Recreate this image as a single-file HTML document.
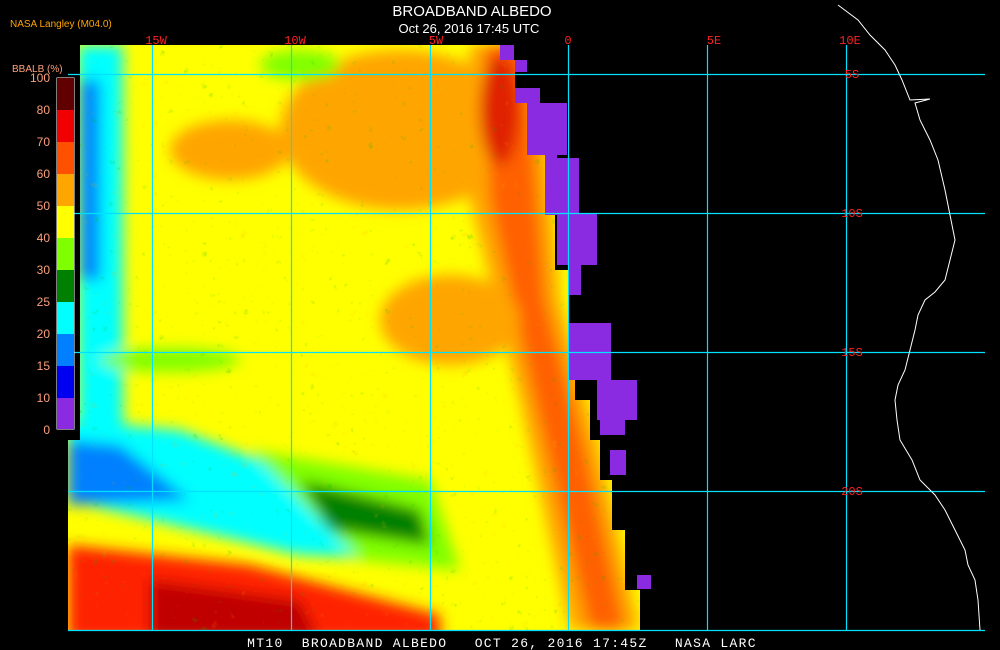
<!DOCTYPE html><html><head><style>
body{margin:0;background:#000;width:1000px;height:650px;overflow:hidden;font-family:"Liberation Sans",sans-serif}
svg{position:absolute;left:0;top:0}
</style></head><body>
<svg width="1000" height="650" viewBox="0 0 1000 650">
<defs>
<filter id="b"><feGaussianBlur stdDeviation="7"/></filter>
<filter id="n" x="0" y="0" width="100%" height="100%"><feTurbulence baseFrequency="0.12" numOctaves="2" seed="3"/><feColorMatrix values="0 0 0 0 0  0 0 0 0 0.5  0 0 0 0 0  0 0 0 1.6 -0.85"/></filter>
<filter id="n2" x="0" y="0" width="100%" height="100%"><feTurbulence baseFrequency="0.1" numOctaves="2" seed="9"/><feColorMatrix values="0 0 0 0 1  0 0 0 0 0.4  0 0 0 0 0  0 0 0 1.6 -0.85"/></filter>
<clipPath id="c"><polygon points="80,45 500,45 500,60 515,60 515,100 527,100 527,150 545,150 545,210 555,210 555,270 568,270 568,330 575,330 575,400 590,400 590,440 600,440 600,480 612,480 612,530 625,530 625,590 640,590 640,630 68,630 68,440 80,440"/></clipPath>
</defs>
<g clip-path="url(#c)">
<rect x="60" y="40" width="600" height="600" fill="#ffff00"/>
<g filter="url(#b)">
<ellipse cx="400" cy="130" rx="120" ry="80" fill="#ffa500"/>
<ellipse cx="230" cy="150" rx="60" ry="30" fill="#ffa500"/>
<polygon points="470,45 540,45 560,300 600,450 640,630 570,630 520,400 470,200" fill="#ffa500"/>
<polygon points="485,45 525,45 545,300 585,450 625,630 590,630 535,400 490,200" fill="#ff6000"/>
<ellipse cx="450" cy="320" rx="70" ry="45" fill="#ffa500"/>
<ellipse cx="500" cy="110" rx="20" ry="55" fill="#e02000"/>
<rect x="78" y="45" width="45" height="400" fill="#00ffff"/>
<rect x="80" y="80" width="20" height="200" fill="#0080ff"/>
<ellipse cx="300" cy="65" rx="40" ry="15" fill="#80ff00"/>
<polygon points="68,420 180,430 430,525 430,560 300,555 68,500" fill="#00ffff"/>
<polygon points="68,440 120,445 190,500 68,505" fill="#0080ff"/>
<polygon points="250,450 430,480 460,570 360,560" fill="#80ff00"/>
<polygon points="300,480 420,510 430,545 330,530" fill="#008000"/>
<polygon points="68,545 250,565 440,615 440,640 68,640" fill="#ff2000"/>
<polygon points="150,580 300,600 320,640 150,640" fill="#c00000"/>
<ellipse cx="170" cy="360" rx="70" ry="12" fill="#80ff00"/>
</g>
<rect x="60" y="40" width="600" height="600" filter="url(#n)" opacity="0.5"/>
<rect x="60" y="40" width="600" height="600" filter="url(#n2)" opacity="0.4"/>
</g>
<g fill="#8a2be2">
<rect x="500" y="45" width="14" height="15"/><rect x="515" y="60" width="12" height="12"/><rect x="515" y="88" width="25" height="15"/><rect x="527" y="103" width="40" height="52"/><rect x="545" y="155" width="12" height="60"/><rect x="557" y="158" width="22" height="57"/><rect x="557" y="213" width="40" height="52"/><rect x="568" y="265" width="13" height="30"/><rect x="568" y="323" width="43" height="57"/><rect x="597" y="380" width="40" height="40"/><rect x="600" y="420" width="25" height="15"/><rect x="610" y="450" width="16" height="25"/><rect x="637" y="575" width="14" height="14"/>
</g>
<g stroke="#00e0ff" stroke-width="1.2">
<line x1="152.5" y1="45" x2="152.5" y2="630"/><line x1="291.5" y1="45" x2="291.5" y2="630"/><line x1="430.5" y1="45" x2="430.5" y2="630"/><line x1="568.5" y1="45" x2="568.5" y2="630"/><line x1="707.5" y1="45" x2="707.5" y2="630"/><line x1="846.5" y1="45" x2="846.5" y2="630"/>
<line x1="68" y1="74.5" x2="985" y2="74.5"/><line x1="68" y1="213.5" x2="985" y2="213.5"/><line x1="68" y1="352.5" x2="985" y2="352.5"/><line x1="68" y1="491.5" x2="985" y2="491.5"/><line x1="68" y1="630.5" x2="985" y2="630.5"/>
</g>
<polyline fill="none" stroke="#fff" stroke-width="1" points="838,5 858,20 870,35 885,50 895,65 902,80 910,100 930,99 915,103 920,120 930,140 938,160 945,190 950,215 955,240 950,260 945,280 935,292 925,300 918,315 915,330 910,350 905,370 898,385 895,400 897,420 900,440 912,460 920,480 935,495 945,510 955,530 965,550 968,565 975,580 978,600 980,630"/>
<g fill="#ff2020" font-family="Liberation Mono,monospace" font-size="12" text-anchor="middle">
<text x="156" y="44">15W</text><text x="295" y="44">10W</text><text x="436" y="44">5W</text><text x="568" y="44">0</text><text x="714" y="44">5E</text><text x="850" y="44">10E</text>
<text x="852" y="78">5S</text><text x="852" y="217">10S</text><text x="852" y="356">15S</text><text x="852" y="495">20S</text>
</g>
<text x="472" y="16" fill="#fff" font-size="15" text-anchor="middle">BROADBAND ALBEDO</text>
<text x="469" y="33" fill="#fff" font-size="13" text-anchor="middle">Oct 26, 2016 17:45 UTC</text>
<text x="10" y="27" fill="#ffa500" font-size="10">NASA Langley (M04.0)</text>
<text x="12" y="72" fill="#ffa07a" font-size="10">BBALB (%)</text>
<rect x="56.5" y="77.5" width="18" height="352" fill="#fff"/>
<g>
<rect x="57" y="78" width="17" height="32" fill="#600000"/><rect x="57" y="110" width="17" height="32" fill="#f00000"/><rect x="57" y="142" width="17" height="32" fill="#ff5000"/><rect x="57" y="174" width="17" height="32" fill="#ffa500"/><rect x="57" y="206" width="17" height="32" fill="#ffff00"/><rect x="57" y="238" width="17" height="32" fill="#80ff00"/><rect x="57" y="270" width="17" height="32" fill="#008000"/><rect x="57" y="302" width="17" height="32" fill="#00ffff"/><rect x="57" y="334" width="17" height="32" fill="#0080ff"/><rect x="57" y="366" width="17" height="32" fill="#0000f0"/><rect x="57" y="398" width="17" height="31" fill="#8a2be2"/>
</g>
<g fill="#ffa07a" font-size="12" text-anchor="end">
<text x="50" y="82">100</text><text x="50" y="114">80</text><text x="50" y="146">70</text><text x="50" y="178">60</text><text x="50" y="210">50</text><text x="50" y="242">40</text><text x="50" y="274">30</text><text x="50" y="306">25</text><text x="50" y="338">20</text><text x="50" y="370">15</text><text x="50" y="402">10</text><text x="50" y="434">0</text>
</g>
<text x="502" y="647" fill="#fff" font-family="Liberation Mono,monospace" font-size="13" text-anchor="middle" letter-spacing="1.3" xml:space="preserve" style="white-space:pre">MT10  BROADBAND ALBEDO   OCT 26, 2016 17:45Z   NASA LARC</text>
</svg>
</body></html>
